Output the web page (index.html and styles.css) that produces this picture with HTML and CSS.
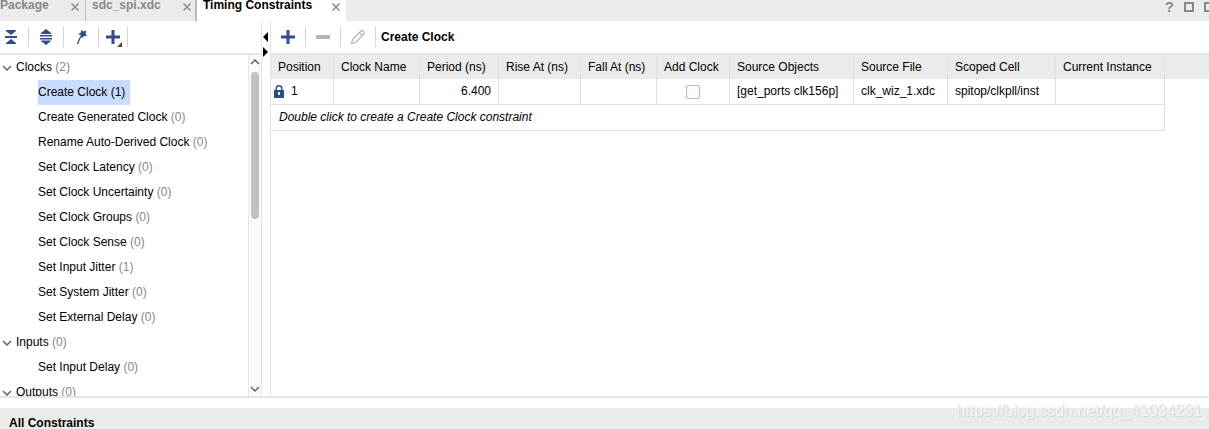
FILE: index.html
```html
<!DOCTYPE html>
<html lang="en">
<head>
<meta charset="utf-8">
<title>Timing Constraints</title>
<link rel="stylesheet" href="styles.css">
</head>
<body>
<header class="tabbar">
  <div class="tab tab-package"><span>Package</span><button class="close" aria-label="Close Package"><svg width="8" height="8" viewBox="0 0 8 8"><path d="M.5 .5l7 7M7.5 .5l-7 7"/></svg></button></div>
  <div class="tab tab-xdc"><span>sdc_spi.xdc</span><button class="close" aria-label="Close sdc_spi.xdc"><svg width="8" height="8" viewBox="0 0 8 8"><path d="M.5 .5l7 7M7.5 .5l-7 7"/></svg></button></div>
  <div class="tab tab-active"><span>Timing Constraints</span><button class="close" aria-label="Close Timing Constraints"><svg width="8" height="8" viewBox="0 0 8 8"><path d="M.5 .5l7 7M7.5 .5l-7 7"/></svg></button></div>
  <div class="window-tools">
    <button class="help" aria-label="Help">?</button>
    <button class="square" aria-label="Maximize"></button>
    <button class="square square-cut" aria-label="Float"></button>
  </div>
</header>
<main class="work">
  <section class="side">
    <div class="toolbar side-tools">
      <button class="tool" aria-label="Collapse all"><svg width="16" height="16" viewBox="0 0 16 16" fill="#2f4d87"><path d="M3 1h10v1L8 6 3 2zM2 7h12v2H2zM8 10l5 4v1H3v-1z"/></svg></button>
      <button class="tool" aria-label="Expand all"><svg width="16" height="16" viewBox="0 0 16 16" fill="#2f4d87"><path d="M8 0l5 4v1H3V4zM2 6h12v1.500H2zM2 9h12v1.500H2zM3 11.500h10v.5l-5 4-5-4z"/></svg></button>
      <button class="tool" aria-label="Constraint wizard"><svg width="16" height="16" viewBox="0 0 16 16"><path d="M8 1l2.500 1.500L13.500 1.500 12.500 4.500l1.500 2.500-3 0-2.200 2.500-.8-3.300L5 5l2.800-1.300z" fill="#2f4d87"/><path d="M8.500 6.500L6.500 10 4.500 15" fill="none" stroke="#2f4d87" stroke-width="1.300"/></svg></button>
      <button class="tool" aria-label="Add constraint"><svg width="18" height="20" viewBox="0 0 18 20"><path d="M7.500 3h3v5.500H16v3h-5.500V17h-3v-5.500H2v-3h5.500z" fill="#2f4d87"/><path d="M18 15v5h-5z" fill="#444"/></svg></button>
    </div>
    <div class="side-body">
      <ul class="tree">
        <li class="group"><svg class="chev" width="10" height="6" viewBox="0 0 10 6"><path d="M1 1l4 4 4-4"/></svg>Clocks <i>(2)</i></li>
        <li class="leaf"><span class="selected">Create Clock (1)</span></li>
        <li class="leaf">Create Generated Clock <i>(0)</i></li>
        <li class="leaf">Rename Auto-Derived Clock <i>(0)</i></li>
        <li class="leaf">Set Clock Latency <i>(0)</i></li>
        <li class="leaf">Set Clock Uncertainty <i>(0)</i></li>
        <li class="leaf">Set Clock Groups <i>(0)</i></li>
        <li class="leaf">Set Clock Sense <i>(0)</i></li>
        <li class="leaf">Set Input Jitter <i>(1)</i></li>
        <li class="leaf">Set System Jitter <i>(0)</i></li>
        <li class="leaf">Set External Delay <i>(0)</i></li>
        <li class="group"><svg class="chev" width="10" height="6" viewBox="0 0 10 6"><path d="M1 1l4 4 4-4"/></svg>Inputs <i>(0)</i></li>
        <li class="leaf">Set Input Delay <i>(0)</i></li>
        <li class="group"><svg class="chev" width="10" height="6" viewBox="0 0 10 6"><path d="M1 1l4 4 4-4"/></svg>Outputs <i>(0)</i></li>
      </ul>
      <div class="scrollbar">
        <svg class="chev" width="10" height="6" viewBox="0 0 10 6"><path d="M1 5l4-4 4 4"/></svg>
        <div class="track"><div class="thumb"></div></div>
        <svg class="chev" width="10" height="6" viewBox="0 0 10 6"><path d="M1 1l4 4 4-4"/></svg>
      </div>
    </div>
  </section>
  <div class="splitter">
    <svg width="5" height="10" viewBox="0 0 5 10"><path d="M5 0v10L0 5z"/></svg>
    <svg width="5" height="10" viewBox="0 0 5 10"><path d="M0 0v10l5-5z"/></svg>
  </div>
  <section class="detail">
    <div class="toolbar detail-tools">
      <button class="tool" aria-label="Add"><svg width="14" height="14" viewBox="0 0 14 14"><path d="M5.500 0h3v5.500H14v3H8.500V14h-3V8.500H0v-3h5.500z" fill="#2f4d87"/></svg></button>
      <button class="tool" aria-label="Remove" disabled><svg width="14" height="14" viewBox="0 0 14 14"><path d="M0 5h14v4H0z" fill="#b4b4b4"/></svg></button>
      <button class="tool" aria-label="Edit" disabled><svg width="16" height="16" viewBox="0 0 16 16" fill="none" stroke="#b4b4b4" stroke-width="1.200"><path d="M1.500 14.500l1-4 8.500-8.500q1-1 2 0l1 1q1 1 0 2L5.500 13.500zM9.500 3.500l3 3"/></svg></button>
      <h1 class="title">Create Clock</h1>
    </div>
    <table class="grid">
      <colgroup><col class="w63"><col class="w86"><col class="w79"><col class="w82"><col class="w76"><col class="w73"><col class="w124"><col class="w94"><col class="w108"><col class="w109"><col></colgroup>
      <thead>
        <tr><th>Position</th><th>Clock Name</th><th>Period (ns)</th><th>Rise At (ns)</th><th>Fall At (ns)</th><th>Add Clock</th><th>Source Objects</th><th>Source File</th><th>Scoped Cell</th><th>Current Instance</th><th class="rest"></th></tr>
      </thead>
      <tbody>
        <tr><td class="pos"><div class="lock"><svg width="10" height="13" viewBox="0 0 10 13"><path d="M2.250 6V3.500a2.750 2.750 0 0 1 5.500 0V6" fill="none" stroke="#2f4d87" stroke-width="1.500"/><path d="M0 5h10v8H0z" fill="#2f4d87"/><path d="M4 7h2v3H4z" fill="#fff"/></svg>1</div></td><td></td><td class="num">6.400</td><td></td><td></td><td class="check"><input type="checkbox" aria-label="Add Clock"></td><td>[get_ports clk156p]</td><td>clk_wiz_1.xdc</td><td>spitop/clkpll/inst</td><td></td><td class="rest"></td></tr>
        <tr><td class="hint" colspan="10">Double click to create a Create Clock constraint</td><td class="rest"></td></tr>
      </tbody>
    </table>
  </section>
</main>
<footer class="bottom"><h2 class="title">All Constraints</h2><span class="watermark">https://blog.csdn.net/qq_41034231</span></footer>
</body>
</html>
```
FILE: styles.css
```css
* { box-sizing: border-box; }
body {
  margin: 0;
  height: 100vh;
  display: flex;
  flex-direction: column;
  overflow: hidden;
  background: #fff;
  color: #000;
  font: 12px/15px "Liberation Sans", Arial, sans-serif;
}
button { padding: 0; border: 0; background: none; font: inherit; color: inherit; }
svg { display: block; flex: none; }
i { font-style: normal; color: #888; }
.title { margin: 0; font-size: 12px; font-weight: bold; }

.tabbar { display: flex; flex: none; height: 21px; background: #ebebeb; }
.tab {
  display: flex;
  justify-content: space-between;
  align-items: flex-start;
  color: #888;
  font-weight: bold;
  line-height: 11px;
}
.tab-package { width: 86px; padding-right: 6px; border-right: 1px solid #bbb; }
.tab-xdc { width: 111px; padding: 0 4px 0 6px; border-right: 2px solid #bbb; }
.tab-active { width: 149px; padding: 0 6px; background: #fff; color: #000; }
.close { padding-top: 3px; }
.close svg { stroke: #888; stroke-width: 1.5; }
.window-tools { display: flex; gap: 10px; margin-left: auto; color: #888; }
.help { height: 14px; font-size: 15px; font-weight: bold; line-height: 14px; }
.square { width: 10px; height: 10px; margin-top: 2px; border: 2px solid #888; }
.square-cut { width: 5px; border-right: 0; }

.work { display: flex; flex: 1; min-height: 0; border-bottom: 2px solid #e5e5e5; }
.side { display: flex; flex-direction: column; width: 262px; border-right: 1px solid #e5e5e5; }
.toolbar { display: flex; flex: none; align-items: center; height: 34px; border-bottom: 2px solid #e5e5e5; }
.tool { display: grid; place-items: center; width: 35px; height: 20px; border-right: 1px solid #d5d5d5; }
.side-tools .tool:first-child { width: 29px; padding-right: 6px; }
.side-tools .tool:last-child { width: 29px; }
.side-body { display: flex; flex: 1; min-height: 0; }
.tree { flex: 1; margin: 0; padding: 0; overflow: hidden; list-style: none; }
.tree li { display: flex; align-items: center; height: 25px; white-space: pre; }
.tree .chev { margin-right: 4px; }
.group { padding-left: 2px; }
.leaf { padding-left: 38px; }
.selected { padding-right: 5px; background: #c9dcfd; line-height: 25px; }
.chev { fill: none; stroke: #666; stroke-width: 1.5; }
.scrollbar {
  display: flex;
  flex-direction: column;
  align-items: center;
  gap: 7px;
  width: 13px;
  padding: 4px 0;
  border-left: 1px solid #e5e5e5;
  background: #fafafa;
}
.track { flex: 1; width: 8px; }
.thumb { height: 48%; border-radius: 4px; background: #c1c1c1; }
.splitter { display: flex; flex-direction: column; gap: 5px; width: 8px; padding: 11px 0 0 1px; }

.detail { flex: 1; min-width: 0; border-left: 1px solid #e5e5e5; }
.detail-tools .title { padding-left: 5px; }
.grid { width: 100%; table-layout: fixed; border-collapse: separate; border-spacing: 0; }
.grid th, .grid td {
  padding: 0 7px;
  border-right: 1px solid #dfdfdf;
  font-weight: normal;
  text-align: left;
  white-space: nowrap;
}
.grid th { height: 24px; background: #ebebeb; }
.grid td { height: 26px; border-bottom: 1px solid #dfdfdf; }
.grid .rest { border-color: transparent; }
.grid .pos { padding-left: 3px; }
.lock { display: flex; align-items: center; gap: 7px; }
.grid .num { text-align: right; }
.grid .check { text-align: center; }
.check input {
  appearance: none;
  display: block;
  width: 14px;
  height: 14px;
  margin: 0 auto;
  border: 1px solid #b8b8b8;
  border-radius: 2px;
  background: #fafafa;
}
.grid .hint { padding-left: 8px; font-style: italic; }
.w63 { width: 63px; }
.w86 { width: 86px; }
.w79 { width: 79px; }
.w82 { width: 82px; }
.w76 { width: 76px; }
.w73 { width: 73px; }
.w124 { width: 124px; }
.w94 { width: 94px; }
.w108 { width: 108px; }
.w109 { width: 109px; }

.bottom { position: relative; flex: none; height: 21px; margin-top: 10px; padding: 8px 9px 0; background: #ebebeb; }
.watermark {
  position: absolute;
  right: 7px;
  bottom: 9px;
  color: #f3f3f3;
  font-size: 16px;
  line-height: 18px;
  text-shadow: 1px 1px 1px #d2d2d2;
}
```
